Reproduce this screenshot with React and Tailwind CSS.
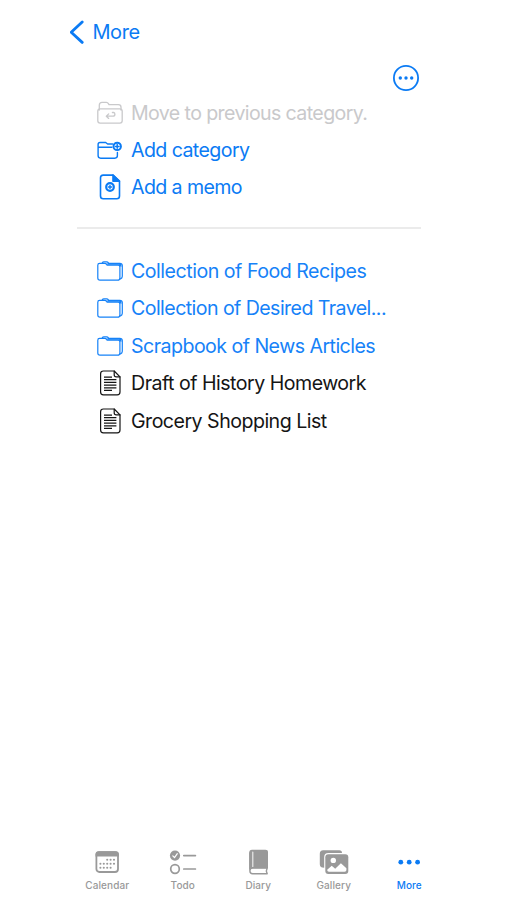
const svgProps = { fill: 'none', stroke: 'currentColor', strokeLinecap: 'round', strokeLinejoin: 'round' };

function MoveFolderIcon() {
  return (
    <svg width="28" height="28" viewBox="0 0 28 28" {...svgProps} strokeWidth="1.3">
      <path d="M3.3 11V6.3Q3.3 3.4 6 3.4h4.4q1.3 0 2 1.2l.6 1h9.4q2.6 0 2.6 2.6V11" />
      <rect x="1.8" y="9.8" width="24.4" height="14.4" rx="2.4" />
      <path d="M16.4 13.5h1.2q1.3.2 1.3 1.7 0 2-2 2h-6.4M12.7 14.9l-2.4 2.3 2.4 2.2" />
    </svg>
  );
}

function AddFolderIcon() {
  return (
    <svg width="28" height="28" viewBox="0 0 28 28" {...svgProps} strokeWidth="1.4">
      <path d="M16.6 8H11.6L9.7 6.5H4Q2.1 6.5 2.1 8.4v11.2q0 2.6 2.6 2.6h14.1q2.6 0 2.6-2.6v-3.2M2.1 11.3h13.8" />
      <circle cx="21.2" cy="10.4" r="3.7" strokeWidth="2" />
      <path d="M21.2 8.6v3.6M19.4 10.4h3.6" strokeWidth="1.5" />
    </svg>
  );
}

function AddMemoIcon() {
  return (
    <svg width="28" height="28" viewBox="0 0 28 28" {...svgProps} strokeWidth="1.6">
      <path d="M17 2.1H7.2Q4.5 2.1 4.5 4.8v18.3q0 2.7 2.7 2.7h13.6q2.7 0 2.7-2.7V8.2z" />
      <path d="M17 2v6.2h6.4z" fill="currentColor" />
      <circle cx="14" cy="14" r="3.8" strokeWidth="2.2" />
      <path d="M14 12.4v3.2M12.4 14h3.2" strokeWidth="1.4" />
    </svg>
  );
}

function FolderIcon() {
  return (
    <svg width="28" height="28" viewBox="0 0 28 28" {...svgProps} strokeWidth="1.2">
      <path d="M4 23.1Q1.8 23.1 1.8 20.9V8.2Q1.8 6.4 3.6 6.4h5.1q1.2 0 2 1.1l.4.6h11q1.8 0 1.8 1.8v11q0 2.2-2.2 2.2z" />
      <path d="M6.2 6q.5-1.1 1.8-1.1h2.6q1.2 0 1.8 1l.2.4h11.2q2.5 0 2.5 2.3v10.7q0 1.8-1.8 2.6M10.8 7l1.5.2h10.5q2 0 2 2" />
    </svg>
  );
}

function MemoIcon() {
  return (
    <svg width="28" height="28" viewBox="0 0 28 28" {...svgProps} strokeWidth="1.2">
      <path d="M18.2 2H7.4Q4.6 2 4.6 4.8v18.3q0 2.8 2.8 2.8h13.8q2.8 0 2.8-2.8V7.8z" />
      <path d="M18.2 2v3.7q0 2.1 2.1 2.1H24" />
      <path d="M8 8h8M8 10.7h12.4M8 13.4h12.4M8 16.1h12.4M8 18.8h12.4M8 21.4h8" strokeLinecap="butt" strokeWidth="1.25" />
    </svg>
  );
}

function CalendarIcon() {
  const rows = [
    [10.8, [13.2, 16.6, 20]],
    [14.8, [6.4, 9.8, 13.2, 16.6, 20]],
    [18.8, [6.4, 9.8, 13.2, 16.6]],
  ];
  return (
    <svg width="26" height="26" viewBox="0 0 26 26" fill="currentColor">
      <rect x="2.4" y="3.2" width="21.6" height="19.8" rx="3" fill="none" stroke="currentColor" strokeWidth="1.8" />
      <path d="M1.5 7.4V5.3Q1.5 2.2 4.6 2.2h17.2q3.1 0 3.1 3.1v2.1z" />
      {rows.map(([y, xs]) => xs.map((x) => <circle key={`${x}-${y}`} cx={x} cy={y} r="1.05" />))}
    </svg>
  );
}

function TodoIcon() {
  return (
    <svg width="28" height="26" viewBox="0 0 28 26" {...svgProps} strokeWidth="1.7">
      <circle cx="6" cy="6.6" r="5.1" fill="currentColor" stroke="none" />
      <path d="M3.8 6.9l1.7 1.8 2.8-4" stroke="white" strokeWidth="1.2" />
      <circle cx="6" cy="20" r="4.3" />
      <path d="M14.8 6.6h11.6M14.8 20h11.6" />
    </svg>
  );
}

function DiaryIcon() {
  return (
    <svg width="26" height="26" viewBox="0 0 26 26" {...svgProps} strokeWidth="1.4">
      <path d="M7 .8h13.4q2.6 0 2.6 2.4v16H7q-2.8 0-2.8 2.8V3.8Q4.2.8 7 .8z" fill="currentColor" stroke="none" />
      <path d="M7.8 3v14.5" stroke="#f2f2f2" strokeWidth="1.1" />
      <path d="M4.9 4v18q0 2.7 2.7 2.7h14.6l-.9-2.6.9-3.1H7.6q-2.7 0-2.7 2.8" />
    </svg>
  );
}

function GalleryIcon() {
  return (
    <svg width="32" height="26" viewBox="0 0 32 26" fill="currentColor">
      <path d="M5.2 1.2h16.1Q24 1.2 24 4H10.4Q6.2 4 6.2 8.1v10.7Q1.8 18.8 1.8 15.2V4.7q0-3.5 3.4-3.5z" />
      <rect x="7.3" y="5.3" width="23" height="19.6" rx="3" />
      <circle cx="15.3" cy="11.4" r="2.7" fill="white" />
      <path d="M9.2 20.7l4.5-4 3.5 3 5.7-5.4 5.5 5v1.7q0 1.8-1.8 1.8H11q-1.8 0-1.8-1.8z" fill="white" />
    </svg>
  );
}

function DotsIcon() {
  return (
    <svg width="26" height="26" viewBox="0 0 26 26" fill="currentColor">
      <circle cx="4.8" cy="13.2" r="2.4" />
      <circle cx="13.2" cy="13.2" r="2.4" />
      <circle cx="21.6" cy="13.2" r="2.4" />
    </svg>
  );
}

function Row({ icon, label, className, textClass }) {
  return (
    <li className={`flex items-center gap-[7px] ${className}`}>
      {icon}
      <span className={`whitespace-nowrap text-[19.6px] leading-6 ${textClass}`}>{label}</span>
    </li>
  );
}

const actions = [
  { icon: <MoveFolderIcon />, label: 'Move to previous category.', className: 'h-[37px] text-[#c9c9cb]', textClass: 'tracking-[-0.62px]' },
  { icon: <AddFolderIcon />, label: 'Add category', className: 'h-[37px] text-[#0b7bf4]', textClass: 'tracking-[-0.59px]' },
  { icon: <AddMemoIcon />, label: 'Add a memo', className: 'h-[37px] text-[#0b7bf4]', textClass: 'tracking-[-0.61px]' },
];

const entries = [
  { icon: <FolderIcon />, label: 'Collection of Food Recipes', className: 'h-[37.5px] text-[#1682f8]', textClass: 'tracking-[-0.485px]' },
  { icon: <FolderIcon />, label: 'Collection of Desired Travel...', className: 'h-[37.5px] text-[#1682f8]', textClass: 'tracking-[-0.57px]' },
  { icon: <FolderIcon />, label: 'Scrapbook of News Articles', className: 'h-[37.5px] text-[#1682f8]', textClass: 'tracking-[-0.54px]' },
  { icon: <MemoIcon />, label: 'Draft of History Homework', className: 'h-[37.5px] text-[#151515]', textClass: 'tracking-[-0.51px]' },
  { icon: <MemoIcon />, label: 'Grocery Shopping List', className: 'h-[37.5px] text-[#151515]', textClass: 'tracking-[-0.52px]' },
];

const tabs = [
  { icon: <CalendarIcon />, label: 'Calendar', className: 'text-[#999999]' },
  { icon: <TodoIcon />, label: 'Todo', className: 'text-[#999999]' },
  { icon: <DiaryIcon />, label: 'Diary', className: 'text-[#999999]' },
  { icon: <GalleryIcon />, label: 'Gallery', className: 'text-[#999999]' },
  { icon: <DotsIcon />, label: 'More', className: 'text-[#0b7bf4]' },
];

export default function App() {
  return (
    <div className="flex h-[900px] w-[507px] flex-col overflow-hidden bg-white pl-[69.5px] pr-[60px] font-['Inter','Liberation_Sans',sans-serif]">
      <header className="flex h-[64px] shrink-0 items-center gap-[9px] text-[#0b7bf4]">
        <svg width="14" height="26" viewBox="0 0 14 26" {...svgProps} strokeWidth="2.8">
          <path d="M12.2 2.9L1.2 13.2l11 10.2" />
        </svg>
        <span className="text-[20px] leading-6 tracking-[-0.45px]">More</span>
      </header>

      <div className="flex h-[30px] shrink-0 items-start justify-end pr-[27px] text-[#0b7bf4]">
        <svg width="28" height="28" viewBox="0 0 28 28">
          <circle cx="14" cy="14" r="12.1" fill="none" stroke="currentColor" strokeWidth="1.8" />
          <circle cx="8.3" cy="14" r="1.7" fill="currentColor" />
          <circle cx="14" cy="14" r="1.7" fill="currentColor" />
          <circle cx="19.7" cy="14" r="1.7" fill="currentColor" />
        </svg>
      </div>

      <ul className="flex flex-col pl-[26.5px]">
        {actions.map((row) => <Row key={row.label} {...row} />)}
      </ul>

      <hr className="ml-[7.5px] mt-[22px] w-[344px] shrink-0 border-0 border-t-2 border-[#ebebeb]" />

      <ul className="flex flex-col pl-[26.5px] pt-[23px]">
        {entries.map((row) => <Row key={row.label} {...row} />)}
      </ul>

      <nav className="mt-auto flex h-[51px] w-[377.5px] shrink-0">
        {tabs.map((tab) => (
          <div key={tab.label} className={`flex w-[75.5px] flex-col items-center ${tab.className}`}>
            {tab.icon}
            <span className="mt-[3px] text-[10px] font-medium leading-[14px] tracking-[0.1px]">{tab.label}</span>
          </div>
        ))}
      </nav>
    </div>
  );
}
